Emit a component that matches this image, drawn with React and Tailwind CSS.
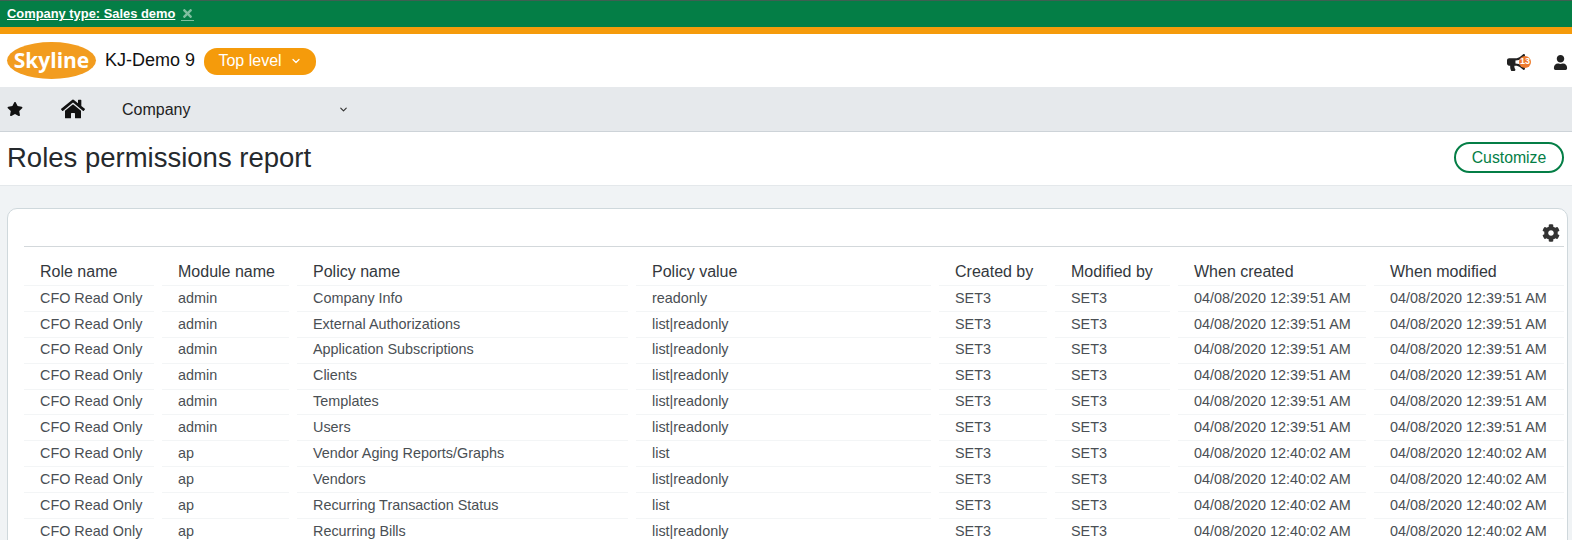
import { FaStar, FaHome, FaBullhorn, FaUser, FaCog, FaTimes } from "react-icons/fa";
import { ChevronDown } from "lucide-react";

const columns = ["Role name", "Module name", "Policy name", "Policy value", "Created by", "Modified by", "When created", "When modified"];

const first = "04/08/2020 12:39:51 AM";
const second = "04/08/2020 12:40:02 AM";

const rows = [
  ["admin", "Company Info", "readonly", first],
  ["admin", "External Authorizations", "list|readonly", first],
  ["admin", "Application Subscriptions", "list|readonly", first],
  ["admin", "Clients", "list|readonly", first],
  ["admin", "Templates", "list|readonly", first],
  ["admin", "Users", "list|readonly", first],
  ["ap", "Vendor Aging Reports/Graphs", "list", second],
  ["ap", "Vendors", "list|readonly", second],
  ["ap", "Recurring Transaction Status", "list", second],
  ["ap", "Recurring Bills", "list|readonly", second],
];

const grid = "grid grid-cols-[130px_127px_331px_295px_108px_115px_188px_1fr] gap-x-[8px]";

const App = () => {
  return (
    <div className="h-[540px] w-[1572px] overflow-hidden bg-[#f0f3f5] font-['Liberation_Sans',Arial,sans-serif] text-[#3a3f44]">
      <div className="flex h-[27px] items-center border-t border-[#3f5f52] bg-[#047e46] pl-[7px] text-[12.9px] font-bold text-white">
        <span className="underline">Company type: Sales demo</span>
        <span className="ml-[6px] border-b border-[#7fbfa0]">
          <FaTimes className="text-[13px] text-[#7fbfa0]" />
        </span>
      </div>
      <div className="h-[7px] bg-[#f59b0b]" />

      <div className="flex h-[53px] items-center bg-white pl-[7px]">
        <div className="flex h-[37px] w-[89px] items-center justify-center rounded-[50%] bg-[#f29c1f] font-['Open_Sans',sans-serif] text-[21px] font-bold text-white">
          Skyline
        </div>
        <span className="ml-[9px] text-[18px] text-[#111]">KJ-Demo 9</span>
        <div className="ml-[9px] mt-[1px] flex h-[27px] w-[112px] items-center justify-center gap-[8px] rounded-[13px] bg-[#f59b0b] text-[16px] text-white">
          Top level
          <ChevronDown size={12} strokeWidth={2.5} />
        </div>
        <div className="relative ml-auto mr-[27px] mt-[3px] text-[#222]">
          <FaBullhorn className="text-[19px]" />
          <span className="absolute left-[12px] top-[3px] flex h-[12px] w-[12px] items-center justify-center rounded-full bg-[#ee7a2d] text-[9px] font-bold text-white">
            13
          </span>
        </div>
        <FaUser className="mr-[4px] mt-[3px] text-[15px] text-[#222]" />
      </div>

      <div className="flex h-[45px] items-center border-b border-[#cdd3d8] bg-[#e6e9ec] pl-[7px] text-[#111]">
        <FaStar className="text-[16px]" />
        <FaHome className="ml-[38px] text-[24px]" />
        <span className="ml-[37px] mt-[1px] w-[216px] text-[16px] text-[#222]">Company</span>
        <ChevronDown size={11} strokeWidth={2.5} className="text-[#333]" />
      </div>

      <div className="flex h-[54px] items-center justify-between border-b border-[#e4e8eb] bg-white pl-[7px] pr-[8px]">
        <h1 className="mb-[2px] text-[27.5px] text-[#25292d]">Roles permissions report</h1>
        <button className="mb-[2px] h-[31px] w-[110px] rounded-[16px] border-2 border-[#047e46] bg-white text-[15.8px] text-[#047e46]">
          Customize
        </button>
      </div>

      <div className="ml-[7px] mr-[4px] mt-[22px] h-[400px] rounded-tl-[10px] rounded-tr-[10px] border border-[#cfd8dc] bg-white pl-[16px] pr-[3px]">
        <div className="flex h-[38px] items-end justify-end border-b border-[#d3d8db] pb-[4px] pr-[4px]">
          <FaCog className="text-[18px] text-[#333]" />
        </div>
        <div className={`${grid} mt-[12px] h-[26px] items-center text-[16px] text-[#33383d]`}>
          {columns.map((col) => (
            <div key={col} className="pl-[16px]">
              {col}
            </div>
          ))}
        </div>
        {rows.map((row) => (
          <div key={row[1]} className={`${grid} h-[25.9px] text-[14.4px] text-[#4a4f54]`}>
            {["CFO Read Only", row[0], row[1], row[2], "SET3", "SET3", row[3], row[3]].map((cell, i) => (
              <div key={i} className="flex items-center border-t border-[#f3f5f6] pl-[16px]">
                {cell}
              </div>
            ))}
          </div>
        ))}
      </div>
    </div>
  );
};

export default App;
